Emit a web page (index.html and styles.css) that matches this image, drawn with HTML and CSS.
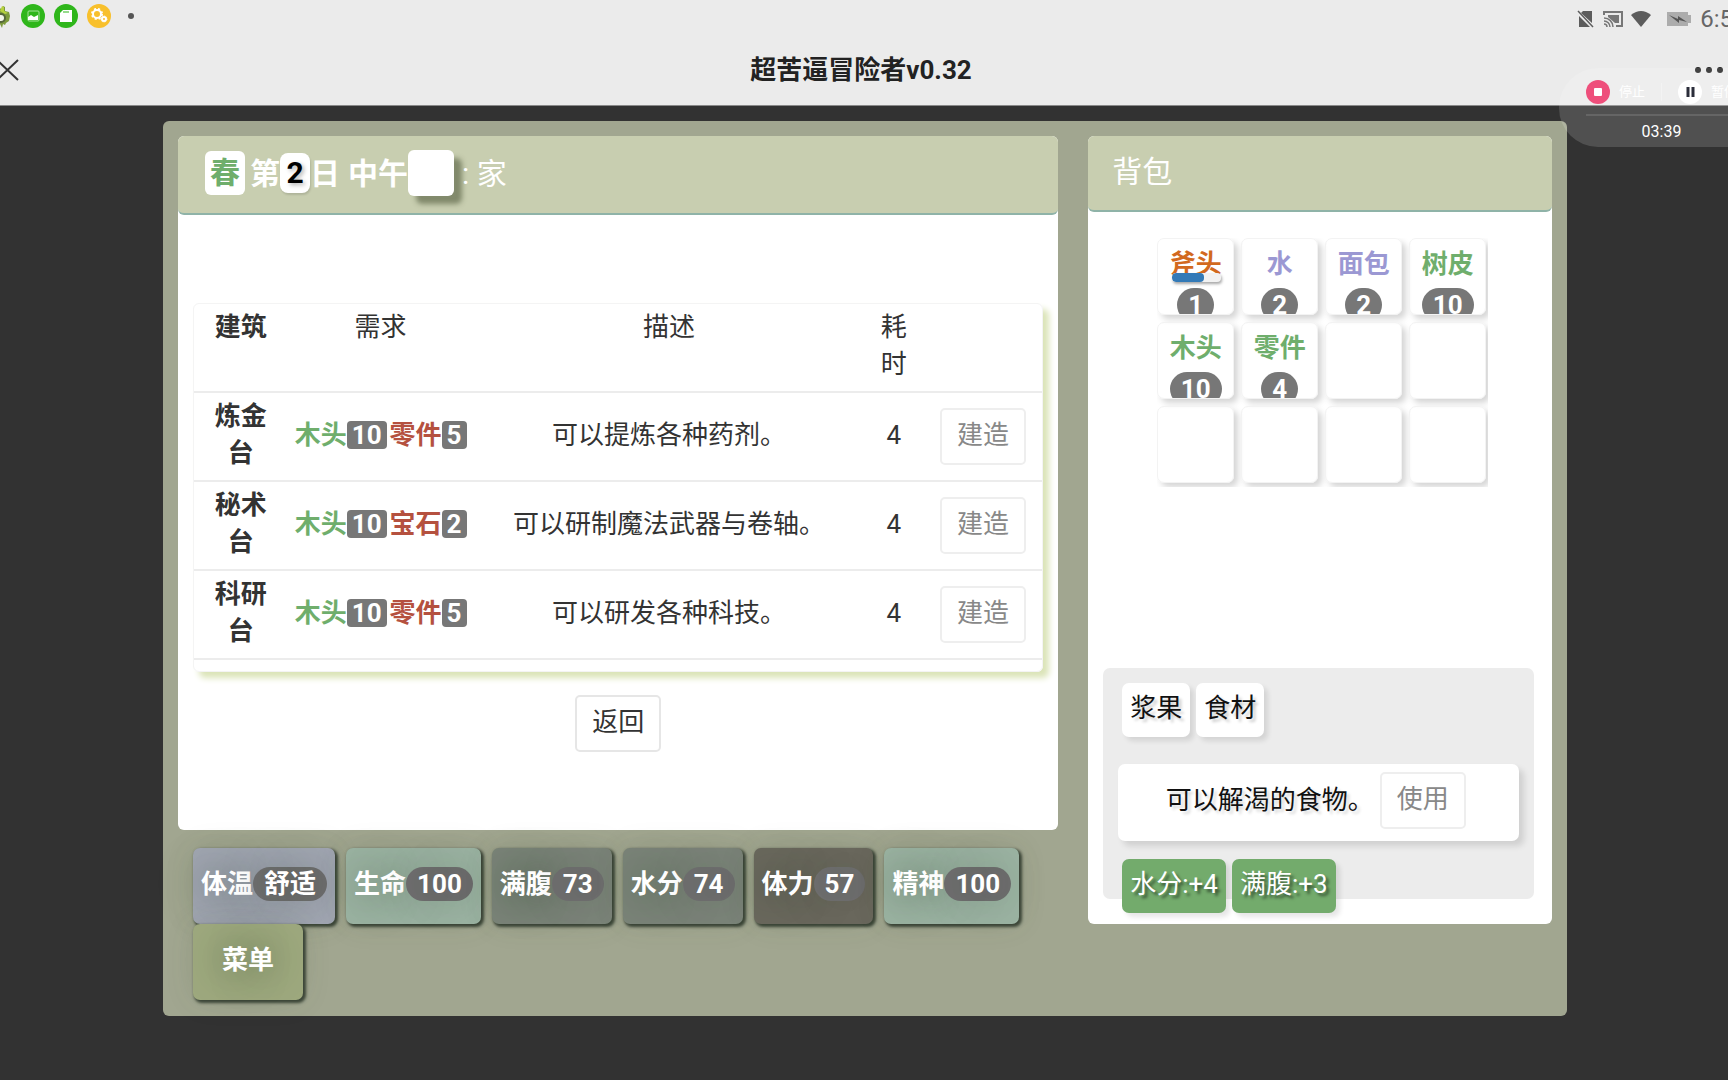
FILE: index.html
```html
<!DOCTYPE html>
<html lang="zh-CN">
<head>
<meta charset="utf-8">
<meta name="viewport" content="width=device-width, initial-scale=1">
<title>超苦逼冒险者v0.32</title>
<link rel="stylesheet" href="styles.css">
</head>
<body>
<header class="top">
  <div class="status">
    <div class="status-left">
      <svg class="gear" width="10" height="24" viewBox="0 0 10 24" aria-hidden="true">
        <path d="M0 4l2 2 1-4 2 1 0 4 4 1 1 4-1 5-3 2-1 2-2-1-1 4-2-4z" fill="#7c9a3c"/>
        <path d="M2 2l2 1v4l4 2-3 1-5-3z" fill="#b6d13e"/>
        <circle cx="1" cy="14" r="5" fill="#56663a"/>
        <circle cx="1" cy="14" r="3" fill="#f3f5ea"/>
      </svg>
      <svg width="24" height="24" viewBox="0 0 24 24" aria-hidden="true">
        <circle cx="12" cy="12" r="12" fill="#2fb61b"/>
        <rect x="7" y="7" width="11" height="10" rx="1" fill="none" stroke="#a5e39a" stroke-width="1"/>
        <path d="M7 16v-3l3-2 3 2 4-2v5z" fill="#fff"/>
      </svg>
      <svg width="24" height="24" viewBox="0 0 24 24" aria-hidden="true">
        <circle cx="12" cy="12" r="12" fill="#2fb61b"/>
        <path d="M9 6h9v12H6V9z" fill="#fff"/>
        <path d="M10 7v2M12 7v2M14 7v2" stroke="#2fb61b" stroke-width="1"/>
      </svg>
      <svg width="24" height="24" viewBox="0 0 24 24" aria-hidden="true">
        <circle cx="12" cy="12" r="12" fill="#f8c02c"/>
        <circle cx="10" cy="10" r="4" fill="none" stroke="#fff" stroke-width="2"/>
        <circle cx="10" cy="10" r="5" fill="none" stroke="#fff" stroke-width="2" stroke-dasharray="2 2"/>
        <circle cx="17" cy="15" r="2" fill="none" stroke="#fff" stroke-width="2"/>
        <circle cx="17" cy="15" r="3" fill="none" stroke="#fff" stroke-width="1" stroke-dasharray="1 1"/>
      </svg>
      <span class="more-dot"></span>
    </div>
    <div class="status-right">
      <svg width="18" height="18" viewBox="0 0 18 18" aria-hidden="true">
        <path d="M6 1h9v12L4 3zM2 6l11 11H2z" fill="#5c5c5c"/>
        <path d="M1 1l15 16" stroke="#5c5c5c" stroke-width="1.5"/>
      </svg>
      <svg width="20" height="18" viewBox="0 0 20 18" aria-hidden="true">
        <path d="M1 5V2h18v14h-6" fill="none" stroke="#777" stroke-width="2"/>
        <path d="M5 5h11v8h-4L5 7z" fill="#777"/>
        <path d="M1 8a9 9 0 0 1 9 9M1 11a6 6 0 0 1 6 6M1 14a3 3 0 0 1 3 3" fill="none" stroke="#777" stroke-width="1.5"/>
      </svg>
      <svg width="20" height="18" viewBox="0 0 20 18" aria-hidden="true">
        <path d="M0 5q10-8 20 0L10 17z" fill="#5c5c5c"/>
      </svg>
      <svg class="battery" width="26" height="16" viewBox="0 0 26 16" aria-hidden="true">
        <path d="M1 1h21v3h3v8h-3v3H1z" fill="#acacac"/>
        <path d="M3 4l9 4 0-3 9 6-8-2v3z" fill="#555"/>
      </svg>
      <span class="clock">6:5</span>
    </div>
  </div>
  <div class="title-bar">
    <button class="close" aria-label="关闭">
      <svg width="20" height="22" viewBox="0 0 20 22"><path d="M-3 1L18 21M18 1L-3 21" stroke="#333" stroke-width="2" fill="none"/></svg>
    </button>
    <h1 class="title">超苦逼冒险者v0.32</h1>
    <button class="dots" aria-label="更多"><i></i><i></i><i></i></button>
  </div>
</header>

<main class="game">
  <div class="left">
    <section class="panel">
      <header class="panel-head panel-head-day">
        <b class="season">春</b><b>第</b><b class="day">2</b><b>日</b><b class="noon">中午</b><span class="blank"></span><span class="place">: 家</span>
      </header>
      <div class="panel-body">
        <div class="table-box">
          <table class="builds">
            <colgroup><col class="c-name"><col class="c-need"><col class="c-desc"><col class="c-time"><col class="c-act"></colgroup>
            <thead>
              <tr><th class="name" scope="col">建筑</th><th scope="col">需求</th><th scope="col">描述</th><th class="time" scope="col">耗时</th><th scope="col" aria-label="操作"></th></tr>
            </thead>
            <tbody>
              <tr><th class="name" scope="row">炼金台</th><td><span class="need"><b class="ok">木头</b><b class="num">10</b> <b class="lack">零件</b><b class="num">5</b></span></td><td>可以提炼各种药剂。</td><td>4</td><td><button class="btn muted">建造</button></td></tr>
              <tr><th class="name" scope="row">秘术台</th><td><span class="need"><b class="ok">木头</b><b class="num">10</b> <b class="lack">宝石</b><b class="num">2</b></span></td><td>可以研制魔法武器与卷轴。</td><td>4</td><td><button class="btn muted">建造</button></td></tr>
              <tr><th class="name" scope="row">科研台</th><td><span class="need"><b class="ok">木头</b><b class="num">10</b> <b class="lack">零件</b><b class="num">5</b></span></td><td>可以研发各种科技。</td><td>4</td><td><button class="btn muted">建造</button></td></tr>
            </tbody>
          </table>
        </div>
        <button class="btn">返回</button>
      </div>
    </section>
    <div class="stats">
      <button class="stat cool">体温<span class="pill">舒适</span></button>
      <button class="stat full">生命<span class="pill">100</span></button>
      <button class="stat mid">满腹<span class="pill">73</span></button>
      <button class="stat mid">水分<span class="pill">74</span></button>
      <button class="stat low">体力<span class="pill">57</span></button>
      <button class="stat full">精神<span class="pill">100</span></button>
      <button class="stat menu">菜单</button>
    </div>
  </div>

  <section class="panel bag">
    <header class="panel-head"><h2 class="bag-title">背包</h2></header>
    <div class="bag-body">
      <div class="slots">
        <div class="slot tool"><span class="item">斧头</span><span class="wear"><span class="wear-fill" style="width:66%"></span></span><span class="pill">1</span></div>
        <div class="slot food"><span class="item">水</span><span class="pill">2</span></div>
        <div class="slot food"><span class="item">面包</span><span class="pill">2</span></div>
        <div class="slot stuff"><span class="item">树皮</span><span class="pill">10</span></div>
        <div class="slot stuff"><span class="item">木头</span><span class="pill">10</span></div>
        <div class="slot stuff"><span class="item">零件</span><span class="pill">4</span></div>
        <div class="slot"></div><div class="slot"></div>
        <div class="slot"></div><div class="slot"></div><div class="slot"></div><div class="slot"></div>
      </div>
      <div class="detail">
        <div class="tags"><span class="tag">浆果</span><span class="tag">食材</span></div>
        <div class="desc"><span>可以解渴的食物。</span><button class="btn muted">使用</button></div>
        <div class="tags"><span class="tag good">水分:+4</span><span class="tag good">满腹:+3</span></div>
      </div>
    </div>
  </section>
</main>

<aside class="recorder">
  <div class="rec-row">
    <button class="rec-btn"><svg width="24" height="24" viewBox="0 0 24 24" aria-hidden="true"><circle cx="12" cy="12" r="12" fill="#ee4f7b"/><rect x="8" y="8" width="8" height="8" rx="1" fill="#fff"/></svg>停止</button>
    <span class="rec-split"></span>
    <button class="rec-btn"><svg width="24" height="24" viewBox="0 0 24 24" aria-hidden="true"><circle cx="12" cy="12" r="12" fill="#fff"/><path d="M10 7v10M15 7v10" stroke="#2b2d3a" stroke-width="3"/></svg>暂停</button>
  </div>
  <time class="rec-time">03:39</time>
</aside>
</body>
</html>
```
FILE: styles.css
```css
* { box-sizing: border-box; }

body {
  margin: 0;
  min-height: 100vh;
  position: relative;
  overflow-x: hidden;
  background: #323232;
  color: #333;
  font: 26px/37px Roboto, "Noto Sans CJK SC", sans-serif;
}

button { font: inherit; color: inherit; cursor: pointer; }

/* phone bars */
.top {
  height: 106px;
  background: #ebebeb;
  border-bottom: 1px solid #888;
}
.status {
  height: 38px;
  display: flex;
  justify-content: space-between;
  overflow: hidden;
}
.status-left { display: flex; align-items: center; gap: 9px; height: 32px; }
.gear { margin-right: 2px; }
.more-dot {
  width: 6px;
  height: 6px;
  margin-left: 8px;
  border-radius: 50%;
  background: #555;
}
.status-right { display: flex; align-items: center; gap: 8px; margin-right: -5px; }
.battery { margin-left: 7px; }
.clock { font-size: 24px; color: #666; }

.title-bar {
  display: flex;
  align-items: center;
  justify-content: space-between;
  height: 64px;
}
.close, .dots {
  display: flex;
  align-items: center;
  width: 40px;
  padding: 0;
  border: 0;
  background: none;
}
.dots { gap: 5px; justify-content: flex-end; padding-right: 5px; }
.dots i { width: 6px; height: 6px; border-radius: 50%; background: #222; }
.title { margin: 0; padding-right: 6px; font-size: 26px; font-weight: 700; color: #222; }

/* game board */
.game {
  display: grid;
  grid-template-columns: 879fr 463fr;
  gap: 30px;
  align-items: start;
  margin: 15px 161px 0 163px;
  padding: 15px 15px 16px;
  border-radius: 6px;
  background: #a1a690;
}
.panel { border-radius: 6px; background: #fff; }
.panel-head {
  display: flex;
  align-items: center;
  height: 76px;
  padding: 0 24px 4px;
  border-bottom: 2px solid #8fb3a8;
  border-radius: 6px;
  background: #c8ceb0;
  color: #fff;
  font-size: 30px;
}
.panel-head-day { height: 79px; padding: 0 27px 3px; }
.season {
  padding: 3px 5px 4px;
  margin-right: 5px;
  border-radius: 6px;
  background: #fff;
  color: #6fae6c;
}
.day {
  width: 30px;
  padding: 1px 0 2px;
  border-radius: 8px;
  background: #fff;
  color: #000;
  text-align: center;
  text-shadow: 2px 2px 4px rgba(0, 0, 0, .3);
  box-shadow: 1px 2px 2px rgba(0, 0, 0, .12);
}
.noon { margin-left: 8px; }
.blank {
  width: 46px;
  height: 46px;
  border-radius: 6px;
  background: #fff;
  box-shadow: 8px 8px 5px rgba(60, 70, 40, .5);
}
.place { margin-left: 8px; }
.bag-title { margin: 0; font-size: 30px; font-weight: 400; }

.panel-body {
  display: flex;
  flex-direction: column;
  align-items: center;
  padding: 88px 15px 78px;
}
.table-box {
  width: 100%;
  height: 369px;
  margin-bottom: 23px;
  overflow: hidden;
  border: 1px solid #f4f4f4;
  border-radius: 6px;
  box-shadow: 6px 6px 6px #dbe4b8;
}
.builds { width: 100%; border-collapse: separate; border-spacing: 0; table-layout: fixed; text-align: center; }
.builds th, .builds td {
  height: 89px;
  padding: 5px 16px 8px;
  border-bottom: 2px solid #ececec;
  font-weight: 400;
  vertical-align: middle;
}
.builds thead th { vertical-align: top; }
.builds th.name { font-weight: 700; }
.builds td { padding: 0 0 3px; }
.builds td:last-child { padding: 0; }
.c-name { width: 11%; }
.c-need { width: 22%; }
.c-desc { width: 46%; }
.c-time { width: 7%; }
.c-act { width: 14%; }
.need { display: flex; align-items: center; justify-content: center; }
.num {
  padding: 0 5px;
  border-radius: 4px;
  background: #777;
  color: #fff;
  line-height: 28px;
}
.ok { color: #6fae6c; }
.lack { margin-left: 3px; color: #b5513f; }

.btn {
  padding: 7px 15px 9px;
  border: 2px solid #e6e6e6;
  border-radius: 5px;
  background: #fff;
  color: #333;
}
.muted { color: #888; border-color: #eee; }

/* status buttons */
.stats { display: flex; flex-wrap: wrap; column-gap: 11px; padding: 18px 0 0 15px; }
.stat {
  display: flex;
  align-items: center;
  height: 76px;
  padding: 0 8px 4px;
  border: 0;
  border-radius: 7px;
  color: #fff;
  font-weight: 700;
  text-shadow: 0 0 40px rgba(30, 50, 30, .7);
  box-shadow: 2px 2px 3px 1px #3c4638, 0 0 30px rgba(80, 95, 60, .1);
}
.pill {
  padding: 0 11px;
  border-radius: 17px;
  background: #717071;
  color: #fff;
  font-weight: 700;
  line-height: 34px;
}
.cool { background: #a2a7b3; }
.full { background: #9cb4a3; }
.mid { background: #7b8579; }
.low { background: #6b695e; }
.menu { padding: 0 29px 4px; background: #9ea97e; }

/* backpack */
.bag-body { display: flex; flex-direction: column; align-items: center; padding: 26px 18px 25px 15px; }
.slots {
  display: grid;
  grid-template-columns: repeat(4, 77px);
  grid-auto-rows: 77px;
  gap: 7px;
  padding: 0 2px 4px 0;
  margin: 0 0 181px 8px;
  overflow: hidden;
}
.slot {
  position: relative;
  display: flex;
  flex-direction: column;
  align-items: center;
  gap: 5px;
  padding-top: 7px;
  overflow: hidden;
  border: 1px solid #f3f3f3;
  border-radius: 7px;
  box-shadow: 4px 4px 6px rgba(0, 0, 0, .17);
}
.item { font-weight: 700; line-height: 37px; }
.slot .pill { background: #777; }
.tool { color: #d2691e; }
.food { color: #9b98d3; }
.stuff { color: #6fae6c; }
.wear {
  position: absolute;
  top: 34px;
  left: 14px;
  right: 12px;
  height: 9px;
  overflow: hidden;
  border-radius: 4px;
  background: #f2f2f2;
  box-shadow: 1px 2px 3px rgba(0, 0, 0, .35);
}
.wear-fill { display: block; height: 100%; border-radius: 4px; background: #337ab7; }

.detail {
  align-self: stretch;
  height: 231px;
  padding: 15px;
  border-radius: 7px;
  background: #ececec;
  color: #111;
}
.tags { display: flex; gap: 6px; padding-left: 4px; }
.tag {
  height: 54px;
  padding: 7px 8px;
  border-radius: 7px;
  background: #fff;
  text-shadow: 3px 3px 3px rgba(0, 0, 0, .2);
  box-shadow: 4px 4px 5px rgba(0, 0, 0, .1);
}
.good { background: #73ab6c; color: #fff; text-shadow: 3px 3px 3px rgba(0, 0, 0, .5); }
.desc {
  display: flex;
  align-items: center;
  justify-content: center;
  gap: 6px;
  height: 77px;
  margin: 27px 0 18px;
  padding: 0 6px 4px 0;
  border-radius: 7px;
  background: #fff;
  text-shadow: 3px 3px 3px rgba(0, 0, 0, .15);
  box-shadow: 5px 5px 6px rgba(0, 0, 0, .12);
}
.desc .btn { text-shadow: none; }

/* floating screen recorder */
.recorder {
  position: absolute;
  top: 68px;
  right: -36px;
  width: 205px;
  height: 79px;
  padding: 12px 0 0 27px;
  border-radius: 39px;
  background: rgba(255, 255, 255, .15);
  color: #fff;
  font-size: 13px;
}
.rec-row {
  display: flex;
  align-items: center;
  gap: 16px;
  height: 36px;
  padding-bottom: 10px;
  border-bottom: 2px solid rgba(255, 255, 255, .12);
}
.rec-btn {
  display: flex;
  align-items: center;
  gap: 9px;
  padding: 0;
  border: 0;
  background: none;
  line-height: 24px;
  white-space: nowrap;
}
.rec-split { width: 1px; height: 18px; background: #f3f3f3; }
.rec-time { display: block; width: 151px; font-size: 16px; line-height: 32px; text-align: center; }
```
